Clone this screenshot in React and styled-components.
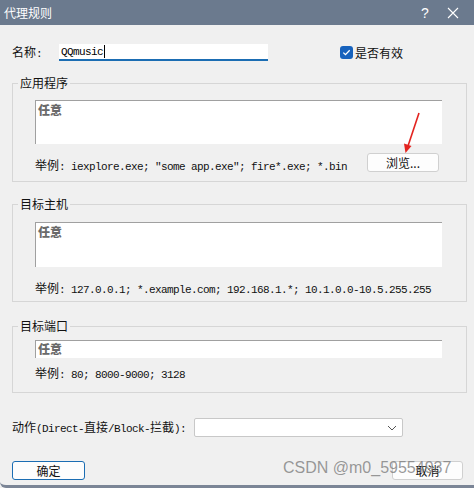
import React from "react";
import styled, { createGlobalStyle } from "styled-components";

const Global = createGlobalStyle`
  html, body { margin: 0; padding: 0; background: #f0f0f0; }
  body { font-family: "Noto Sans CJK SC", "Noto Sans", sans-serif; }
  * { box-sizing: border-box; }
`;

const cjk = `"Noto Sans CJK SC", "Noto Sans", sans-serif`;
const mono = `"Liberation Mono", "Noto Sans CJK SC", monospace`;

const Window = styled.div`
  position: relative;
  width: 474px;
  height: 488px;
  overflow: hidden;
  background: #f0f0f0;
  border-bottom: 3px solid #7b8596;
  border-bottom-left-radius: 6px;
  display: flex;
  flex-direction: column;
`;

const TitleBar = styled.div`
  height: 25px;
  flex: none;
  background: #6b7a8e;
  display: flex;
  align-items: center;
  padding-left: 4px;
  color: #fff;
`;

const Title = styled.div`
  flex: 1;
  font-family: ${cjk};
  font-size: 12px;
  line-height: 16px;
`;

const TitleButton = styled.div`
  width: ${(p) => p.$w}px;
  display: flex;
  justify-content: center;
  align-items: center;
  font-family: "Liberation Sans", sans-serif;
  font-size: 14px;
`;

const Content = styled.div`
  padding: 19px 7px 0 12px;
  display: flex;
  flex-direction: column;
`;

const NameRow = styled.div`
  display: flex;
  align-items: center;
  height: 17px;
`;

const Label = styled.div`
  font-family: ${cjk};
  font-size: 12px;
  line-height: 16px;
  color: #111;
  width: ${(p) => (p.$w ? `${p.$w}px` : "auto")};
  white-space: nowrap;
`;

const MonoPart = styled.span`
  font-family: ${mono};
  font-size: 11px;
  letter-spacing: -0.6px;
`;

const NameInput = styled.div`
  width: 209px;
  height: 17px;
  background: #fff;
  border-bottom: 2px solid #1b6db3;
  display: flex;
  align-items: center;
  padding-left: 2px;
  font-family: ${mono};
  font-size: 11px;
  letter-spacing: -0.6px;
  color: #000;
`;

const Caret = styled.span`
  display: inline-block;
  width: 1px;
  height: 13px;
  background: #000;
  margin-left: 1px;
`;

const CheckWrap = styled.label`
  display: flex;
  align-items: center;
  margin-left: 72px;
  gap: 2px;
`;

const CheckBox = styled.span`
  width: 13px;
  height: 13px;
  border-radius: 3px;
  background: #1762bd;
  display: flex;
  align-items: center;
  justify-content: center;
`;

const Group = styled.fieldset`
  margin: ${(p) => p.$mt}px 0 0 0;
  padding: 0;
  width: 455px;
  border: 1px solid #d6d6d6;
  min-width: 0;
`;

const Legend = styled.legend`
  margin-left: 5px;
  padding: 0 2px;
  font-family: ${cjk};
  font-size: 12px;
  line-height: 16px;
  color: #111;
`;

const GroupBody = styled.div`
  padding: ${(p) => p.$pt}px 24px ${(p) => p.$pb}px 22px;
  display: flex;
  flex-direction: column;
`;

const TextBox = styled.div`
  height: ${(p) => p.$h}px;
  background: #fff;
  border-top: 1px solid #a0a0a0;
  border-left: 1px solid #a0a0a0;
  padding: ${(p) => (p.$h > 20 ? "1px 2px" : "0 2px")};
  font-family: ${cjk};
  font-size: 12px;
  font-weight: 900;
  line-height: 16px;
  color: #6a6a6a;
`;

const ExampleRow = styled.div`
  display: flex;
  align-items: flex-end;
  justify-content: space-between;
  margin-top: ${(p) => p.$mt}px;
`;

const Example = styled.div`
  font-family: ${cjk};
  font-size: 12px;
  line-height: 14px;
  color: #111;
  white-space: nowrap;
  margin-bottom: ${(p) => p.$mb || 0}px;
  margin-top: ${(p) => p.$mt || 0}px;
`;

const Button = styled.button`
  width: ${(p) => p.$w}px;
  height: 19px;
  padding: 0;
  margin-right: ${(p) => p.$mr || 0}px;
  background: #fdfdfd;
  border: 1px solid ${(p) => (p.$primary ? "#1b6db3" : "#d0d0d0")};
  border-radius: 3px;
  font-family: ${cjk};
  font-size: 12px;
  line-height: 16px;
  color: #111;
`;

const ActionRow = styled.div`
  display: flex;
  align-items: center;
  margin-top: 25px;
  height: 19px;
`;

const Select = styled.div`
  margin-left: 8px;
  width: 209px;
  height: 19px;
  background: #fff;
  border: 1px solid #c8c8c8;
  border-radius: 2px;
  display: flex;
  align-items: center;
  justify-content: flex-end;
  padding-right: 5px;
`;

const ButtonRow = styled.div`
  display: flex;
  justify-content: space-between;
  margin-top: 24px;
  padding-right: 4px;
`;

const Watermark = styled.div`
  position: absolute;
  left: 283px;
  top: 459px;
  font-family: "Liberation Sans", Arial, sans-serif;
  font-size: 16px;
  line-height: 18px;
  color: rgba(120, 120, 120, 0.75);
  white-space: nowrap;
  pointer-events: none;
`;

const ArrowSvg = styled.svg`
  position: absolute;
  left: 0;
  top: 0;
  pointer-events: none;
`;

function Mixed({ cjkText, rest }) {
  return (
    <>
      {cjkText}
      <MonoPart>{rest}</MonoPart>
    </>
  );
}

export default function App() {
  return (
    <>
      <Global />
      <Window>
        <TitleBar>
          <Title>代理规则</Title>
          <TitleButton $w={14}>?</TitleButton>
          <TitleButton $w={42}>
            <svg width="12" height="12" viewBox="0 0 12 12">
              <path d="M1 1L11 11M11 1L1 11" stroke="#fff" strokeWidth="1.1" />
            </svg>
          </TitleButton>
        </TitleBar>
        <Content>
          <NameRow>
            <Label $w={47}>
              <Mixed cjkText="名称" rest=":" />
            </Label>
            <NameInput>
              QQmusic
              <Caret />
            </NameInput>
            <CheckWrap>
              <CheckBox>
                <svg width="9" height="9" viewBox="0 0 9 9">
                  <path d="M1.3 4.6L3.5 6.7L7.7 2.2" fill="none" stroke="#fff" strokeWidth="1.3" />
                </svg>
              </CheckBox>
              <Label>是否有效</Label>
            </CheckWrap>
          </NameRow>

          <Group $mt={14}>
            <Legend>应用程序</Legend>
            <GroupBody $pt={9} $pb={9}>
              <TextBox $h={44}>任意</TextBox>
              <ExampleRow $mt={9}>
                <Example $mb={-2}>
                  <Mixed cjkText="举例" rest={': iexplore.exe; "some app.exe"; fire*.exe; *.bin'} />
                </Example>
                <Button $w={72} $mr={3}>浏览...</Button>
              </ExampleRow>
            </GroupBody>
          </Group>

          <Group $mt={14}>
            <Legend>目标主机</Legend>
            <GroupBody $pt={10} $pb={4}>
              <TextBox $h={45}>任意</TextBox>
              <Example $mt={14}>
                <Mixed cjkText="举例" rest=": 127.0.0.1; *.example.com; 192.168.1.*; 10.1.0.0-10.5.255.255" />
              </Example>
            </GroupBody>
          </Group>

          <Group $mt={16}>
            <Legend>目标端口</Legend>
            <GroupBody $pt={6} $pb={10}>
              <TextBox $h={18}>任意</TextBox>
              <Example $mt={8}>
                <Mixed cjkText="举例" rest=": 80; 8000-9000; 3128" />
              </Example>
            </GroupBody>
          </Group>

          <ActionRow>
            <Label>
              动作<MonoPart>(Direct-</MonoPart>直接<MonoPart>/Block-</MonoPart>拦截<MonoPart>):</MonoPart>
            </Label>
            <Select>
              <svg width="10" height="6" viewBox="0 0 10 6">
                <path d="M1 1L5 5L9 1" fill="none" stroke="#555" strokeWidth="1" />
              </svg>
            </Select>
          </ActionRow>

          <ButtonRow>
            <Button $w={73} $primary>确定</Button>
            <Button $w={71}>取消</Button>
          </ButtonRow>
        </Content>

        <ArrowSvg width="474" height="488" viewBox="0 0 474 488">
          <path d="M419 113L408 146" stroke="#e3231f" strokeWidth="1.6" fill="none" />
          <path d="M405.5 153L404 143.5L411.5 146Z" fill="#e3231f" />
        </ArrowSvg>
        <Watermark>CSDN @m0_59554937</Watermark>
      </Window>
    </>
  );
}
